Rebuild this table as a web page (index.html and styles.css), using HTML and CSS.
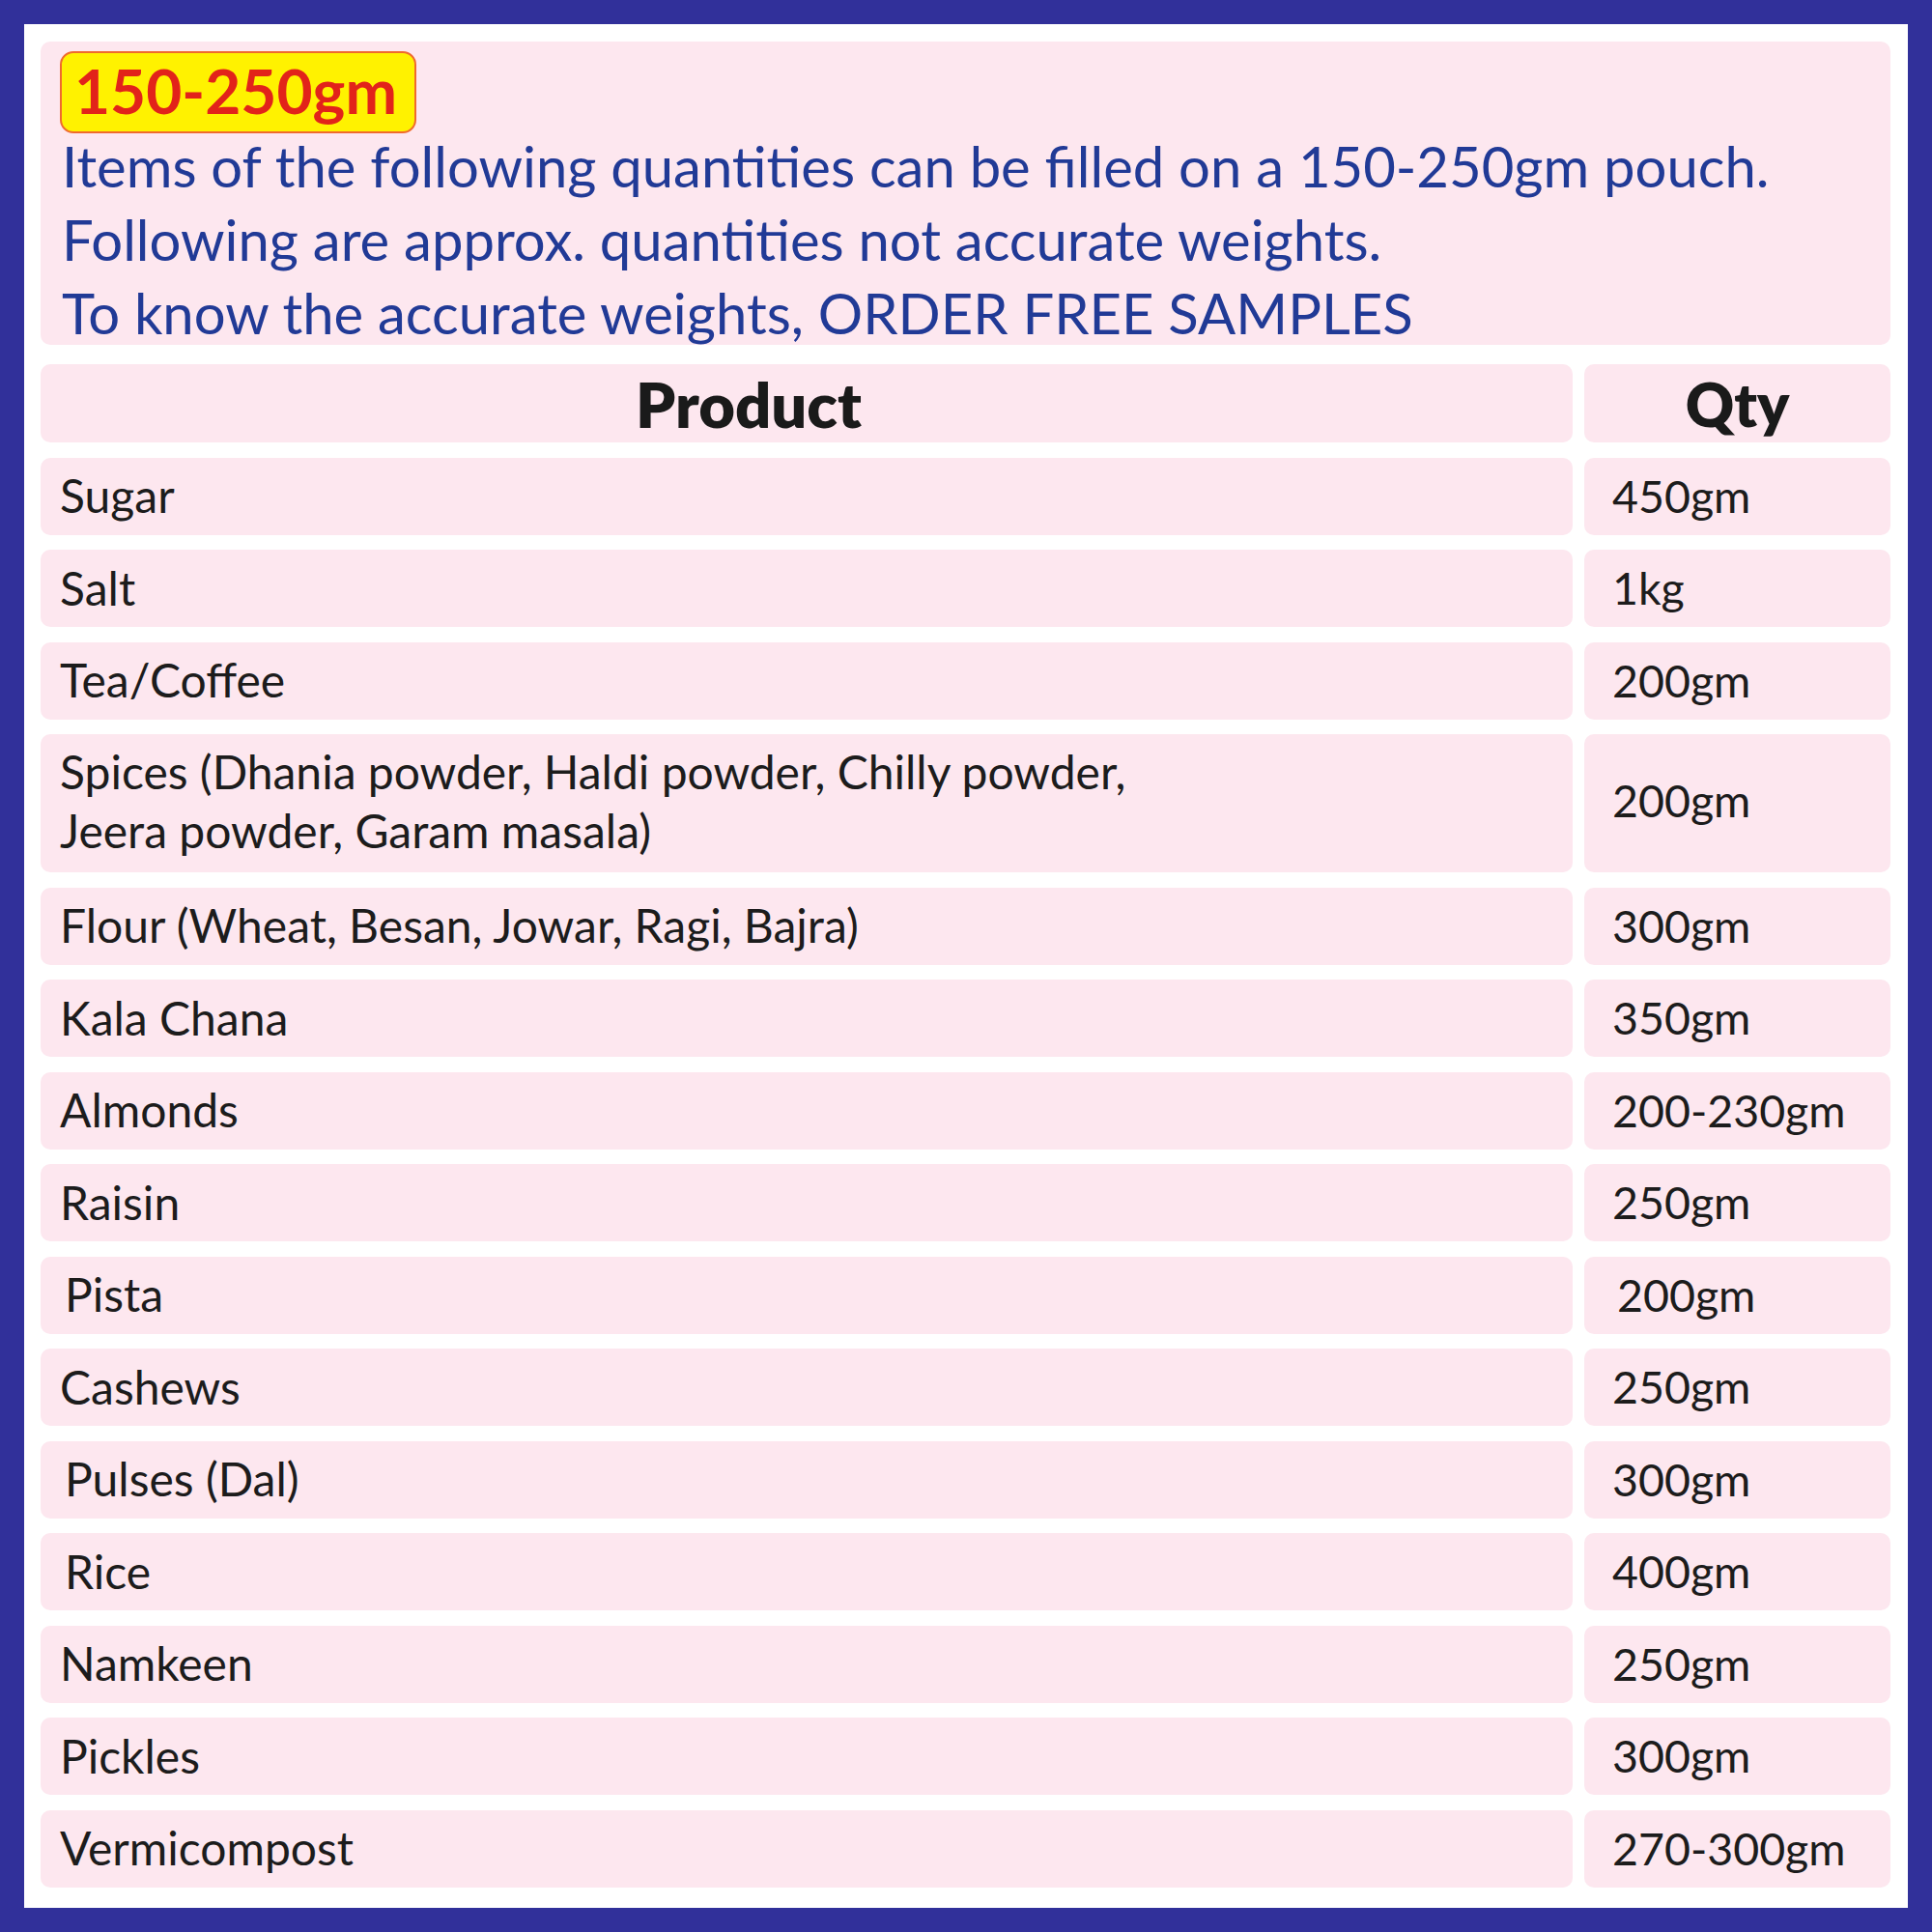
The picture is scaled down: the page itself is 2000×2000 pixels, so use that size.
FILE: index.html
```html
<!DOCTYPE html>
<html>
<head>
<meta charset="utf-8">
<link rel="stylesheet" href="styles.css">
</head>
<body>
<div class="frame">
  <div class="inner">
    <section class="intro">
      <div class="badge">150-250gm</div>
      <p class="note">Items of the following quantities can be filled on a 150-250gm pouch.<br>Following are approx. quantities not accurate weights.<br>To know the accurate weights, ORDER FREE SAMPLES</p>
    </section>
    <div class="table">
      <div class="cell head head-product">Product</div><div class="cell head">Qty</div>
      <div class="cell name">Sugar</div><div class="cell qty">450gm</div>
      <div class="cell name">Salt</div><div class="cell qty">1kg</div>
      <div class="cell name">Tea/Coffee</div><div class="cell qty">200gm</div>
      <div class="cell name tall">Spices (Dhania powder, Haldi powder, Chilly powder,<br>Jeera powder, Garam masala)</div><div class="cell qty tall">200gm</div>
      <div class="cell name">Flour (Wheat, Besan, Jowar, Ragi, Bajra)</div><div class="cell qty">300gm</div>
      <div class="cell name">Kala Chana</div><div class="cell qty">350gm</div>
      <div class="cell name">Almonds</div><div class="cell qty">200-230gm</div>
      <div class="cell name">Raisin</div><div class="cell qty">250gm</div>
      <div class="cell name shift">Pista</div><div class="cell qty shift">200gm</div>
      <div class="cell name">Cashews</div><div class="cell qty">250gm</div>
      <div class="cell name shift">Pulses (Dal)</div><div class="cell qty">300gm</div>
      <div class="cell name shift">Rice</div><div class="cell qty">400gm</div>
      <div class="cell name">Namkeen</div><div class="cell qty">250gm</div>
      <div class="cell name">Pickles</div><div class="cell qty">300gm</div>
      <div class="cell name">Vermicompost</div><div class="cell qty">270-300gm</div>
    </div>
  </div>
</div>
</body>
</html>
```

FILE: styles.css
```css
* { box-sizing: border-box; }
html, body { margin: 0; padding: 0; }
body {
  font-family: Lato, "Noto Sans", sans-serif;
  color: #1c1c1c;
}
.frame {
  width: 2000px;
  height: 2000px;
  background: #31309a;
  padding: 25px;
}
.inner {
  width: 100%;
  height: 100%;
  background: #ffffff;
  padding: 18px 18px 19px 17px;
  display: flex;
  flex-direction: column;
  gap: 20px;
}
.intro {
  background: #fde7ef;
  border-radius: 10px;
  height: 314px;
  padding: 10px 20px 0 20px;
}
.badge {
  display: inline-block;
  height: 85px;
  width: 369px;
  background: #fff200;
  border: 2px solid #ef6a2d;
  border-radius: 14px;
  color: #e2231a;
  font-weight: 700;
  font-size: 64px;
  line-height: 78px;
  padding-left: 13px;
}
.note {
  margin: 0;
  padding-left: 2px;
  color: #213a96;
  font-size: 58px;
  line-height: 76px;
  margin-top: -4px;
}
.table {
  display: grid;
  grid-template-columns: 1fr 317px;
  column-gap: 12px;
  row-gap: 15.5px;
}
.cell {
  background: #fde7ef;
  border-radius: 10px;
  display: flex;
  align-items: center;
  height: 80px;
}
.head {
  height: 81px;
  justify-content: center;
  font-weight: 800;
  font-size: 62px;
  color: #1a1a1a;
}
.head-product {
  font-size: 65px;
  padding-right: 120px;
}
.name {
  padding-left: 20px;
  font-size: 48px;
  padding-bottom: 2px;
}
.qty {
  padding-left: 29px;
  font-size: 46.5px;
  padding-bottom: 2px;
}
.shift { padding-left: 25px; }
.qty.shift { padding-left: 34px; }
.tall {
  height: 143px;
  line-height: 61px;
  padding-bottom: 6px;
}
```
